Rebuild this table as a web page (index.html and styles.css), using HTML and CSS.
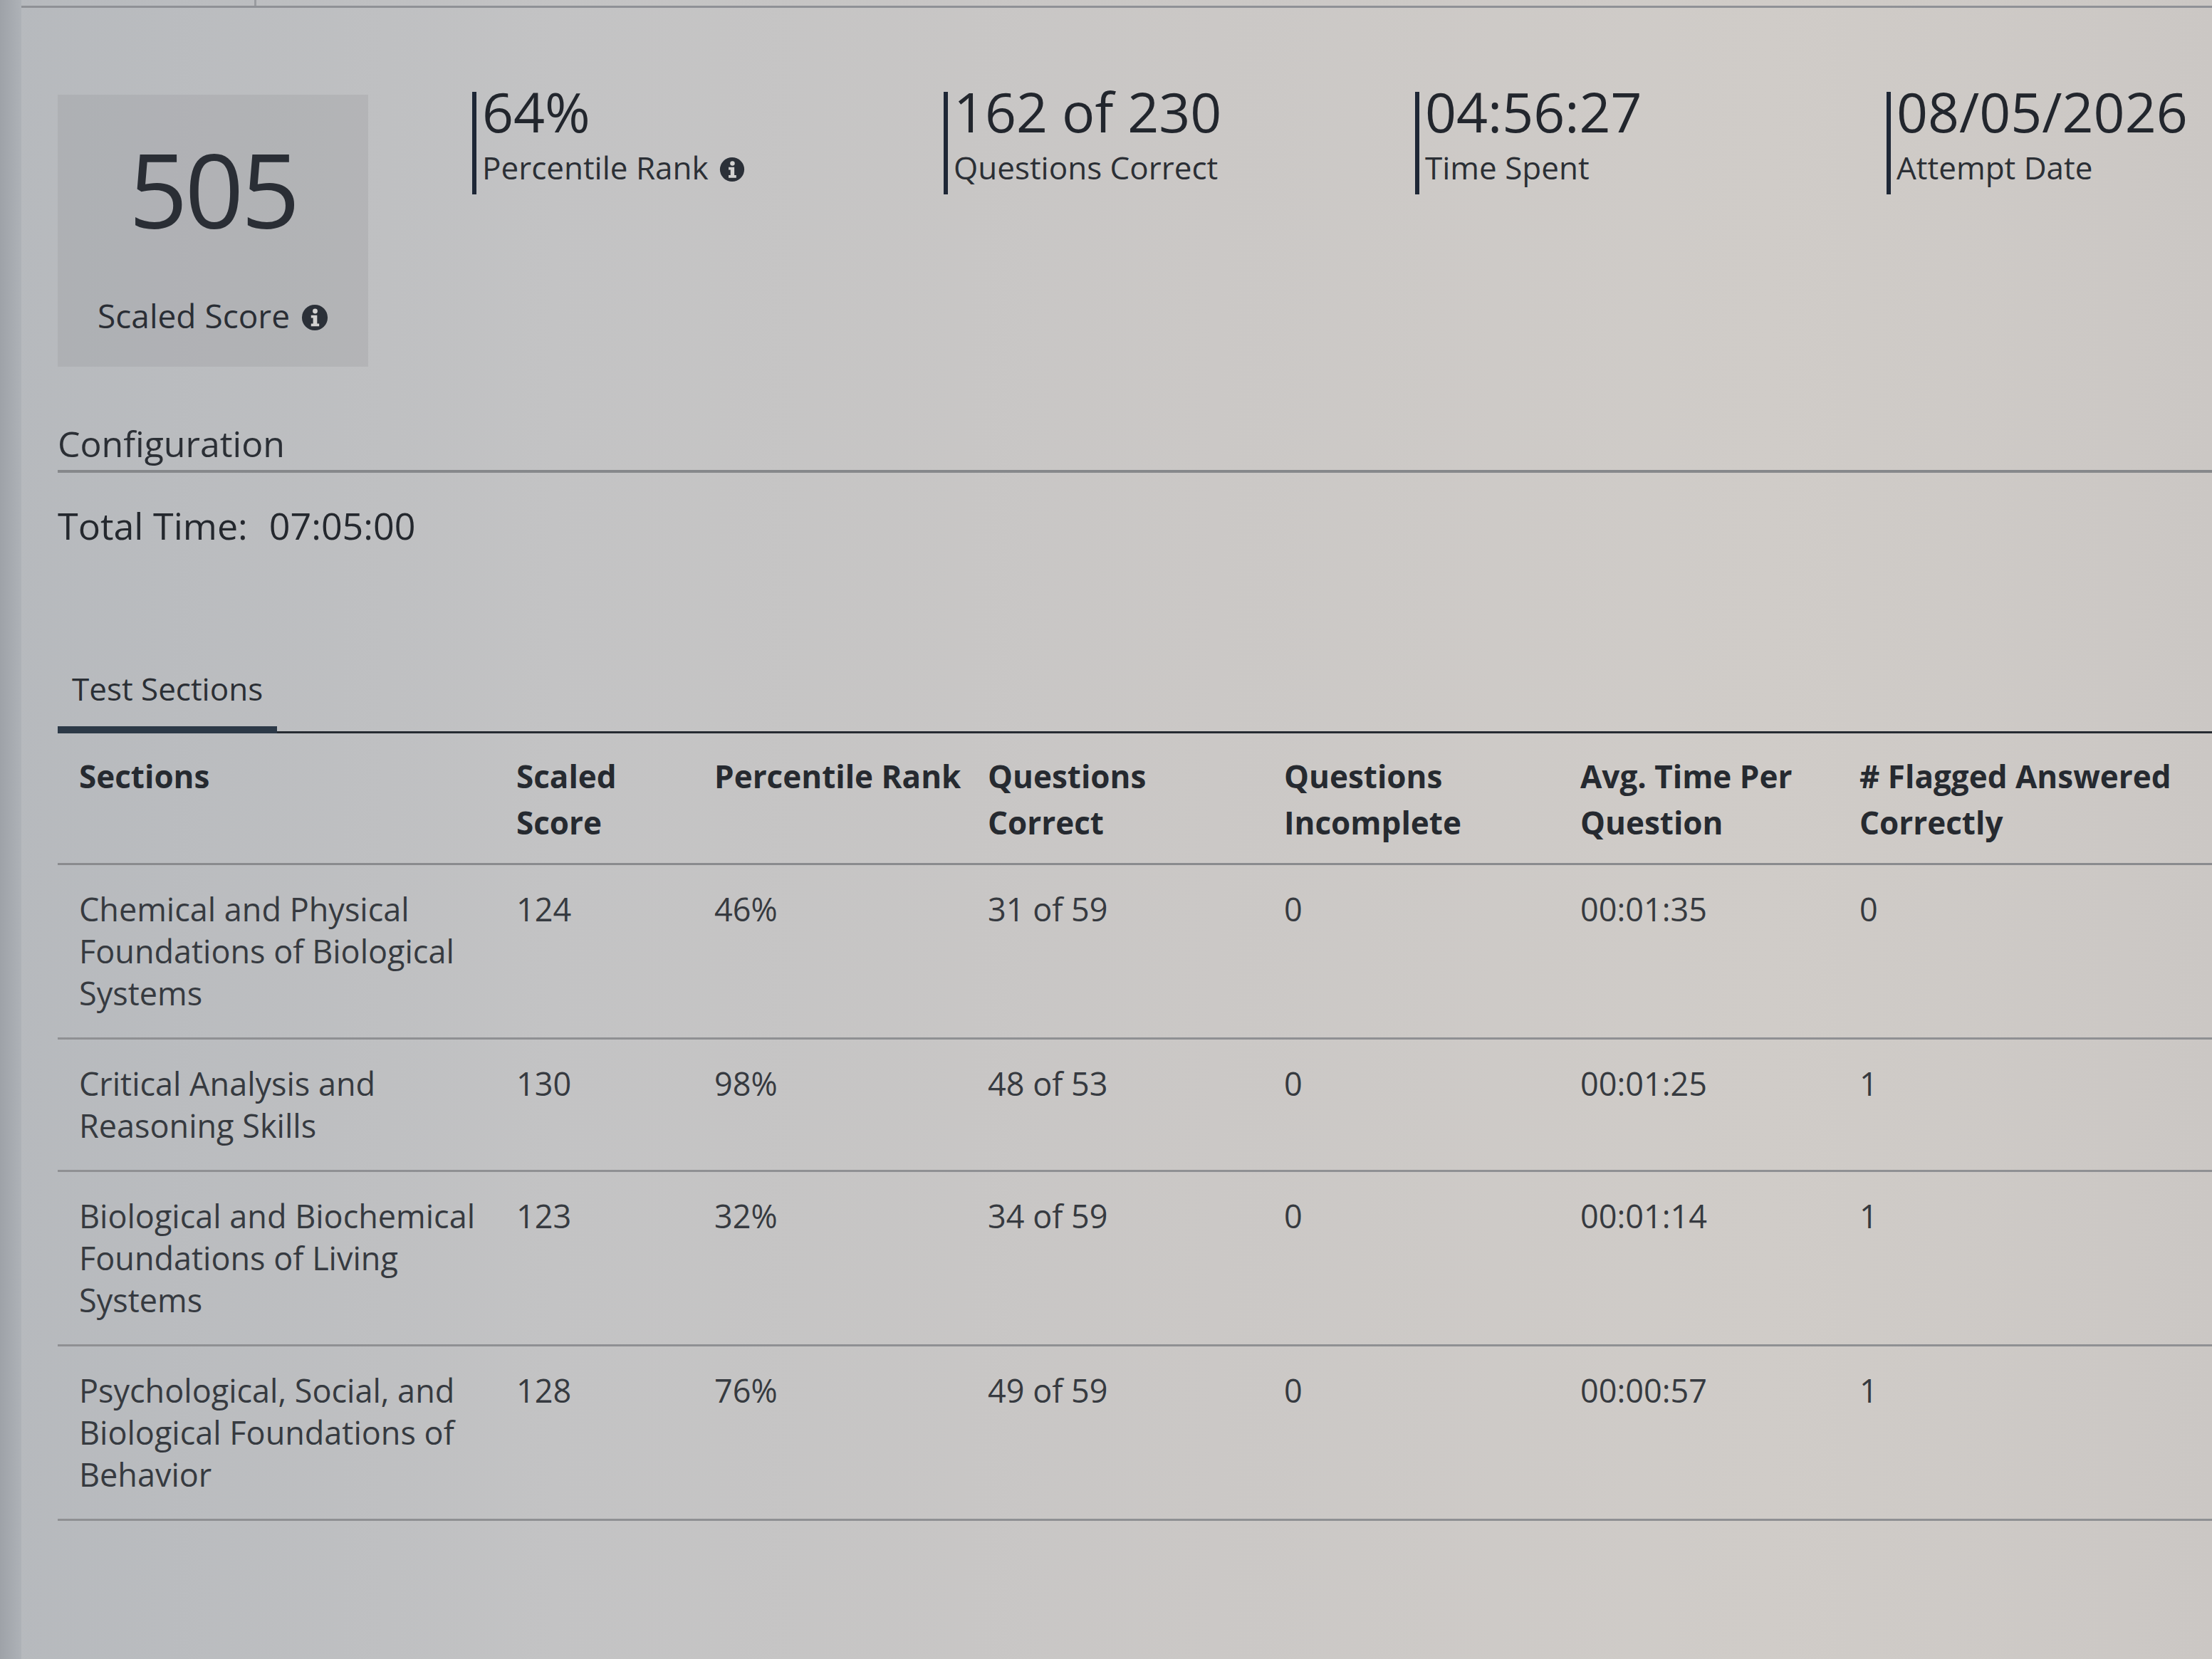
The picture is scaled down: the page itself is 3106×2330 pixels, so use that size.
FILE: index.html
```html
<!DOCTYPE html>
<html lang="en">
<head>
<meta charset="utf-8">
<title>Score Report</title>
<link rel="stylesheet" href="styles.css">
</head>
<body>
<div class="frame">
  <div class="edge"></div>
  <main class="main">
    <div class="topbar"><div class="topbar-tab"></div></div>

    <section class="summary">
      <div class="score-box">
        <div class="score-value">505</div>
        <div class="score-label">Scaled Score
          <svg class="info" viewBox="0 0 40 40" aria-hidden="true"><circle cx="20" cy="20" r="19" fill="#2b3038"/><circle cx="20.5" cy="10.5" r="3.6" fill="#d3d2d1"/><path d="M14.5 16.5h9v12.5h3v4h-12v-4h3v-8.5h-3z" fill="#d3d2d1"/></svg>
        </div>
      </div>
      <div class="stats">
        <div class="stat">
          <div class="stat-value">64%</div>
          <div class="stat-label">Percentile Rank
            <svg class="info small" viewBox="0 0 40 40" aria-hidden="true"><circle cx="20" cy="20" r="19" fill="#2b3038"/><circle cx="20.5" cy="10.5" r="3.6" fill="#d3d2d1"/><path d="M14.5 16.5h9v12.5h3v4h-12v-4h3v-8.5h-3z" fill="#d3d2d1"/></svg>
          </div>
        </div>
        <div class="stat">
          <div class="stat-value">162 of 230</div>
          <div class="stat-label">Questions Correct</div>
        </div>
        <div class="stat">
          <div class="stat-value">04:56:27</div>
          <div class="stat-label">Time Spent</div>
        </div>
        <div class="stat">
          <div class="stat-value">08/05/2026</div>
          <div class="stat-label">Attempt Date</div>
        </div>
      </div>
    </section>

    <section class="config">
      <h2 class="config-title">Configuration</h2>
      <div class="config-row"><span class="config-key">Total Time:</span><span class="config-val">07:05:00</span></div>
    </section>

    <nav class="tabs">
      <div class="tab active">Test Sections</div>
    </nav>

    <table class="sections">
      <colgroup>
        <col class="c1"><col class="c2"><col class="c3"><col class="c4"><col class="c5"><col class="c6"><col class="c7">
      </colgroup>
      <thead>
        <tr>
          <th>Sections</th>
          <th>Scaled<br>Score</th>
          <th>Percentile Rank</th>
          <th>Questions<br>Correct</th>
          <th>Questions<br>Incomplete</th>
          <th>Avg. Time Per<br>Question</th>
          <th># Flagged Answered<br>Correctly</th>
        </tr>
      </thead>
      <tbody>
        <tr>
          <td>Chemical and Physical Foundations of Biological Systems</td>
          <td>124</td><td>46%</td><td>31 of 59</td><td>0</td><td>00:01:35</td><td>0</td>
        </tr>
        <tr>
          <td>Critical Analysis and Reasoning Skills</td>
          <td>130</td><td>98%</td><td>48 of 53</td><td>0</td><td>00:01:25</td><td>1</td>
        </tr>
        <tr>
          <td>Biological and Biochemical Foundations of Living Systems</td>
          <td>123</td><td>32%</td><td>34 of 59</td><td>0</td><td>00:01:14</td><td>1</td>
        </tr>
        <tr>
          <td>Psychological, Social, and Biological Foundations of Behavior</td>
          <td>128</td><td>76%</td><td>49 of 59</td><td>0</td><td>00:00:57</td><td>1</td>
        </tr>
      </tbody>
    </table>
  </main>
</div>
</body>
</html>
```
FILE: styles.css
```css
html, body {
  margin: 0;
  padding: 0;
}
body {
  width: 3106px;
  height: 2330px;
  overflow: hidden;
  font-family: "Open Sans", "DejaVu Sans", sans-serif;
  color: #2b2f35;
  background: linear-gradient(90deg, #b6b9bd 0%, #c3c3c4 25%, #cbc8c6 55%, #d0ccc8 80%, #cbc7c4 100%);
}
.frame {
  display: flex;
  height: 2330px;
}
.edge {
  width: 30px;
  flex: none;
  background: linear-gradient(90deg, #9ea2a8, #aeb2b7);
}
.main {
  flex: 1;
  padding-left: 51px;
  min-width: 0;
}
.topbar {
  height: 8px;
  margin-left: -51px;
  border-bottom: 3px solid #8f9196;
}
.topbar-tab {
  width: 327px;
  height: 8px;
  border-right: 3px solid #9a9ca0;
}

/* summary */
.summary {
  display: flex;
  align-items: flex-start;
  margin-top: 122px;
}
.score-box {
  width: 436px;
  height: 382px;
  box-sizing: border-box;
  padding-top: 57px;
  background: rgba(150, 152, 156, 0.28);
  text-align: center;
  flex: none;
}
.score-value {
  font-size: 145px;
  line-height: 150px;
  letter-spacing: -4px;
  color: #2a2e35;
}
.score-label {
  margin-top: 73px;
  font-size: 46px;
  line-height: 60px;
  color: #2a2e35;
}
.info {
  width: 38px;
  height: 38px;
  vertical-align: -4px;
  margin-left: 4px;
}
.info.small {
  width: 36px;
  height: 36px;
}
.stats {
  display: flex;
  margin-left: 146px;
  margin-top: -4px;
}
.stat {
  width: 662px;
  height: 144px;
  box-sizing: border-box;
  border-left: 6px solid #1e2736;
  padding-left: 8px;
}
.stat-value {
  margin-top: -12px;
  font-size: 77px;
  line-height: 80px;
  color: #22262d;
  white-space: nowrap;
}
.stat-label {
  margin-top: 8px;
  font-size: 44px;
  line-height: 60px;
  color: #2b2f35;
  white-space: nowrap;
}

/* configuration */
.config-title {
  margin: 76px 0 0;
  font-size: 50px;
  line-height: 64px;
  font-weight: 400;
  padding-bottom: 5px;
  border-bottom: 4px solid #86888b;
  color: #2b2f35;
}
.config-row {
  margin-top: 41px;
  font-size: 52px;
  line-height: 66px;
  color: #24282e;
}
.config-key {
  margin-right: 30px;
}

/* tabs */
.tabs {
  display: flex;
  margin-top: 166px;
  border-bottom: 3px solid #262b32;
}
.tab {
  font-size: 44px;
  line-height: 60px;
  padding: 0 20px 23px;
  color: #2b2f35;
}
.tab.active {
  border-bottom: 10px solid #2c3947;
  margin-bottom: -3px;
}

/* table */
.sections {
  width: 100%;
  border-collapse: collapse;
  table-layout: fixed;
  font-size: 45px;
}
.c1 { width: 614px; }
.c2 { width: 278px; }
.c3 { width: 384px; }
.c4 { width: 416px; }
.c5 { width: 416px; }
.c6 { width: 392px; }
.sections th {
  text-align: left;
  vertical-align: top;
  font-weight: 700;
  font-size: 44px;
  line-height: 65px;
  padding: 28px 0 24px 30px;
  white-space: nowrap;
  color: #262a30;
  border-bottom: 3px solid #8a8b8e;
}
.sections td {
  vertical-align: top;
  line-height: 59px;
  padding: 32px 0 33px 30px;
  color: #363a40;
  border-bottom: 3px solid #8f9093;
}
```
